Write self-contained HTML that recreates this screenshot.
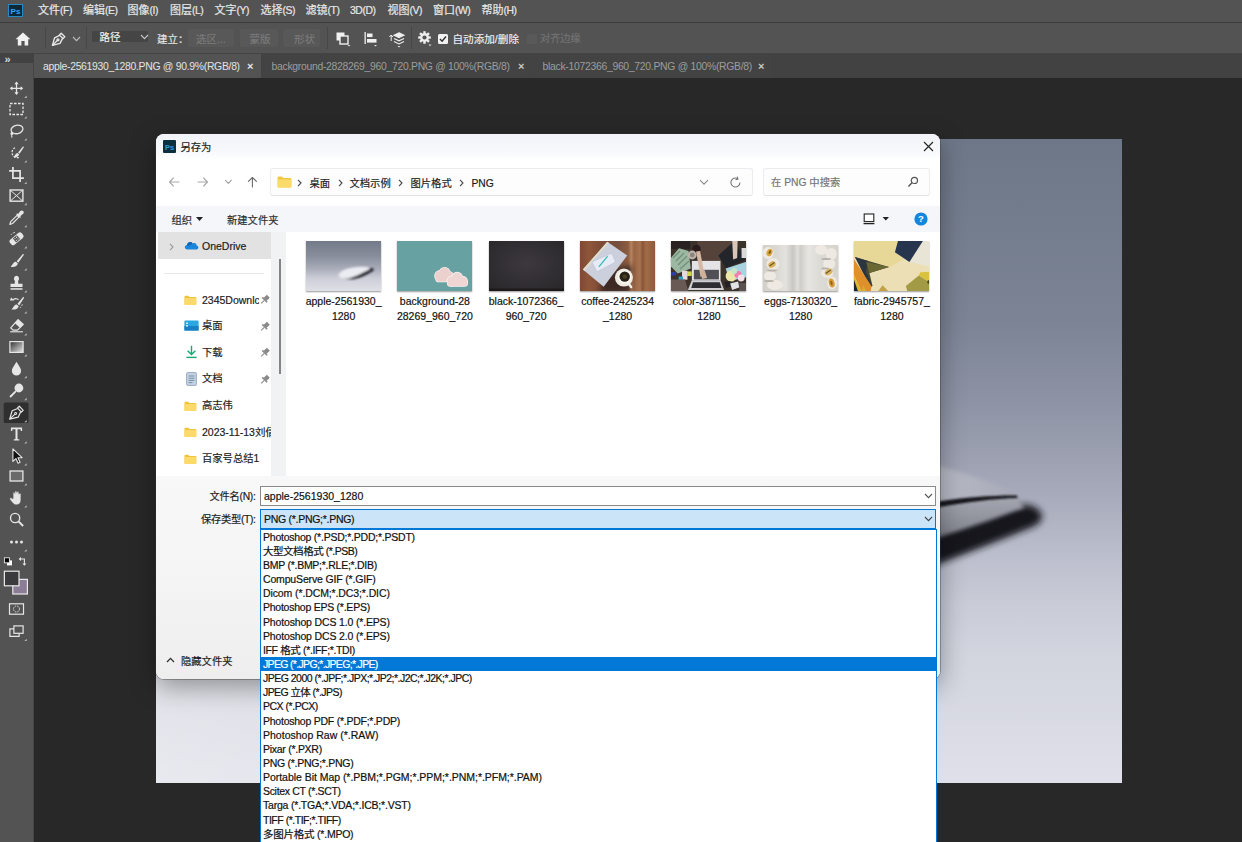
<!DOCTYPE html>
<html lang="zh-CN">
<head>
<meta charset="utf-8">
<title>另存为</title>
<style>
*{box-sizing:border-box;margin:0;padding:0}
html,body{width:1242px;height:842px;overflow:hidden;background:#282828}
body{position:relative;font-family:"Liberation Sans","Noto Sans CJK SC",sans-serif;font-size:12px;color:#000}
.abs{position:absolute}
/* ===== Photoshop chrome ===== */
#menubar{left:0;top:0;width:1242px;height:22px;background:#535353}
#menubar .m{-webkit-text-stroke:0.2px currentColor;position:absolute;top:-1px;height:22px;line-height:22px;color:#e8e8e8;font-size:11px;white-space:nowrap}
#menubar .m i{font-style:normal;font-size:10.4px;letter-spacing:-0.45px}
#menuline{left:0;top:22px;width:1242px;height:1px;background:#3c3c3c}
#optbar{left:0;top:23px;width:1242px;height:30px;background:#535353}
#optbar .t{-webkit-text-stroke:0.15px currentColor;position:absolute;top:0;height:30px;line-height:32px;color:#e8e8e8;font-size:12px;white-space:nowrap}
#optbar .sep{position:absolute;top:4px;width:1px;height:22px;background:#474747}
#tabbar{left:0;top:53px;width:1242px;height:25px;background:#424242}
.tab{position:absolute;top:0;height:25px;line-height:27.5px;font-size:10.4px;letter-spacing:-0.29px;white-space:nowrap;color:#9d9d9d;background:#434343}
.tab.on{background:#535353;color:#e4e4e4}
#tools{left:0;top:53px;width:34px;height:789px;background:#535353}
#toolstop{left:0;top:53px;width:34px;height:10px;background:#424242}
.tool{position:absolute;left:5px;width:24px;height:20px}
.tab .x{position:absolute;top:0;font-size:11px;font-weight:bold;color:#c9c9c9}
.tab.on .x{color:#e6e6e6}
/* ===== canvas ===== */
#canvas{left:156px;top:139px;width:966px;height:644px}
/* ===== dialog ===== */
#dlg{-webkit-text-stroke:0.18px currentColor;left:156px;top:134px;width:784px;height:545px;background:#fff;border-radius:8px;overflow:hidden;box-shadow:0 8px 26px rgba(0,0,0,.36),0 0 0 1px rgba(60,60,60,.35);font-size:12px;color:#1a1a1a}
#dlg .title{left:0;top:0;width:784px;height:26px;background:linear-gradient(180deg,#f1f3f8,#f8f9fb 70%,#fff)}
#dlg .cmd{left:0;top:72px;width:784px;height:26px;background:#f4f6f9}
#dlg .bottom{left:0;top:342px;width:784px;height:203px;background:linear-gradient(180deg,#f8f8f9 0%,#f5f5f6 45%,#eeeeef 100%)}
.lbl{position:absolute;white-space:nowrap}
.inp{position:absolute;background:#fff;border:1px solid #8a8a8a}
.crumb{top:39px;font-size:12px;line-height:16px;color:#444}
.ct{top:42.5px;font-size:10.3px;line-height:14px;color:#1b1b1b}
/* nav pane */
.nav{position:absolute;left:46px;white-space:nowrap;height:16px;line-height:16px}
/* thumbs */
.th{box-shadow:0 1px 1.5px rgba(0,0,0,.4)}
.cap{position:absolute;top:160px;width:100px;text-align:center;line-height:14.5px;font-size:10.5px;color:#111;white-space:nowrap}
/* dropdown */
#dd{left:260px;top:529px;width:677px;height:320px;background:#fff;border:1px solid #0078d7;font-size:10.5px;color:#111}
#dd div{-webkit-text-stroke:0.2px currentColor;position:absolute;left:0;width:675px;height:14.14px;line-height:14.14px;padding-left:2px;white-space:nowrap}
#dd div.sel{background:#0078d7;color:#fff}
</style>
</head>
<body>
<div class="abs" id="menubar">
<svg class="abs" style="left:8px;top:4px" width="15" height="13" viewBox="0 0 15 13"><rect x="0.5" y="0.5" width="14" height="12" fill="#0a2a3c" stroke="#2489c4" stroke-width="1"/><text x="7.5" y="9.6" font-family="Liberation Sans, sans-serif" font-size="8" font-weight="bold" fill="#31a8ff" text-anchor="middle">Ps</text></svg>
<span class="m" style="left:38px">文件<i>(F)</i></span>
<span class="m" style="left:83px">编辑<i>(E)</i></span>
<span class="m" style="left:127.5px">图像<i>(I)</i></span>
<span class="m" style="left:170px">图层<i>(L)</i></span>
<span class="m" style="left:214.5px">文字<i>(Y)</i></span>
<span class="m" style="left:260.5px">选择<i>(S)</i></span>
<span class="m" style="left:305.5px">滤镜<i>(T)</i></span>
<span class="m" style="left:350px"><i>3D(D)</i></span>
<span class="m" style="left:387.5px">视图<i>(V)</i></span>
<span class="m" style="left:433px">窗口<i>(W)</i></span>
<span class="m" style="left:481.5px">帮助<i>(H)</i></span>
</div>
<div class="abs" id="menuline"></div>
<div class="abs" id="optbar">
<svg class="abs" style="left:15px;top:9px" width="16" height="14" viewBox="0 0 16 14"><path d="M8 0.6 L0.6 7.2 H2.8 V13.4 H6.4 V9 H9.6 V13.4 H13.2 V7.2 H15.4 Z" fill="#f0f0f0"/></svg>
<div class="sep" style="left:45px"></div>
<svg class="abs" style="left:51px;top:8px" width="16" height="16" viewBox="0 0 16 16"><g fill="none" stroke="#eaeaea" stroke-width="1.3" stroke-linejoin="round" stroke-linecap="round"><path d="M10.2 2.2 L13.8 5.8 L12 7.6 L8.4 4 Z"/><path d="M8.6 4.4 L3.6 6.8 L1.4 14.4 L9 12.4 L11.6 7.4"/><path d="M1.6 14.2 L6.4 9.4"/><circle cx="7" cy="8.8" r="1"/></g></svg>
<svg class="abs" style="left:71.5px;top:13px" width="9" height="6" viewBox="0 0 9 6"><path d="M1 1 L4.5 4.6 L8 1" fill="none" stroke="#bdbdbd" stroke-width="1.1"/></svg>
<div class="sep" style="left:86px"></div>
<div class="abs" style="left:92.3px;top:8px;width:56.2px;height:10.8px;background:#454545;border-radius:1px"></div>
<span class="t" style="left:99.5px;top:-2px;font-size:10.5px;color:#f2f2f2">路径</span>
<svg class="abs" style="left:139.5px;top:11px" width="9" height="6" viewBox="0 0 9 6"><path d="M1 1 L4.5 4.6 L8 1" fill="none" stroke="#c8c8c8" stroke-width="1.1"/></svg>
<span class="t" style="left:157px;top:0px;font-size:10.5px;color:#e6e6e6">建立：</span>
<div class="abs" style="left:187.5px;top:6px;width:46.5px;height:18px;background:#585858;border-radius:2px"></div>
<span class="t" style="left:196px;top:0;font-size:10.5px;color:#7b7b7b">选区...</span>
<div class="abs" style="left:240px;top:6px;width:37.5px;height:18px;background:#585858;border-radius:2px"></div>
<span class="t" style="left:249.5px;top:0;font-size:10.5px;color:#7b7b7b">蒙版</span>
<div class="abs" style="left:282.5px;top:6px;width:37.5px;height:18px;background:#585858;border-radius:2px"></div>
<span class="t" style="left:294px;top:0;font-size:10.5px;color:#7b7b7b">形状</span>
<div class="sep" style="left:327px"></div>
<svg class="abs" style="left:336px;top:9px" width="15" height="15" viewBox="0 0 15 15"><rect x="0.5" y="0.5" width="8" height="8" fill="#f0f0f0"/><rect x="4" y="4" width="8" height="8" fill="#535353" stroke="#f0f0f0" stroke-width="1.4"/><path d="M11.5 13 h3 l-1.5 1.6z" fill="#ddd"/></svg>
<svg class="abs" style="left:364px;top:9px" width="14" height="15" viewBox="0 0 14 15"><rect x="0.5" y="0" width="1.3" height="12" fill="#f0f0f0"/><rect x="3" y="1.5" width="5.5" height="3.6" fill="#f0f0f0"/><rect x="3" y="7" width="9.5" height="3.6" fill="#f0f0f0"/><path d="M10 13 h3 l-1.5 1.6z" fill="#ddd"/></svg>
<svg class="abs" style="left:389px;top:8px" width="17" height="17" viewBox="0 0 17 17"><g fill="none" stroke="#eee" stroke-width="1.1"><path d="M10 1.8 L15 4.2 L10 6.6 L5 4.2 Z" fill="#eee"/><path d="M5 7.4 L10 9.8 L15 7.4"/><path d="M5 10.6 L10 13 L15 10.6"/></g><path d="M2.2 4 v6 M0.4 6 L2.2 4 L4 6" fill="none" stroke="#eee" stroke-width="1"/><path d="M8.5 15 h3 l-1.5 1.6z" fill="#ddd"/></svg>
<div class="sep" style="left:411px"></div>
<svg class="abs" style="left:418px;top:8px" width="15" height="16" viewBox="0 0 15 16"><g transform="translate(6.5 6.5)"><g fill="#eee"><rect x="-1.2" y="-6.3" width="2.4" height="12.6"/><rect x="-1.2" y="-6.3" width="2.4" height="12.6" transform="rotate(45)"/><rect x="-1.2" y="-6.3" width="2.4" height="12.6" transform="rotate(90)"/><rect x="-1.2" y="-6.3" width="2.4" height="12.6" transform="rotate(135)"/></g><circle r="4.4" fill="#eee"/><circle r="2.1" fill="#535353"/></g><path d="M10.5 13.6 h3 l-1.5 1.6z" fill="#ddd"/></svg>
<div class="abs" style="left:438px;top:11px;width:9.5px;height:9.5px;background:#f2f2f2;border-radius:1.5px"></div>
<svg class="abs" style="left:438px;top:11px" width="10" height="10" viewBox="0 0 10 10"><path d="M2 5 L4.1 7.2 L8 2.6" fill="none" stroke="#333" stroke-width="1.5"/></svg>
<span class="t" style="left:452.5px;top:0;font-size:10.6px;color:#f0f0f0">自动添加/删除</span>
<div class="abs" style="left:527px;top:11px;width:9.5px;height:9.5px;background:#595959;border-radius:1.5px"></div>
<span class="t" style="left:540px;top:0;font-size:10.2px;color:#747474">对齐边缘</span>
</div>
<div class="abs" id="tabbar">
<div class="tab on" style="left:34px;width:227px"><span style="position:absolute;left:9px">apple-2561930_1280.PNG @ 90.9%(RGB/8)</span><span class="x" style="left:213px">×</span></div>
<div class="tab" style="left:262px;width:270px"><span style="position:absolute;left:9.5px">background-2828269_960_720.PNG @ 100%(RGB/8)</span><span class="x" style="left:256px">×</span></div>
<div class="tab" style="left:533px;width:238px"><span style="position:absolute;left:9.5px">black-1072366_960_720.PNG @ 100%(RGB/8)</span><span class="x" style="left:225px">×</span></div>
</div>
<div class="abs" style="left:0;top:52.5px;width:1242px;height:1px;background:#444"></div>
<div class="abs" id="tools"></div>
<div class="abs" id="toolstop"></div>
<div class="abs" style="left:33px;top:63px;width:1px;height:779px;background:#454545"></div>
<div class="abs" style="left:4.5px;top:52.5px;font-size:11px;line-height:12px;color:#d8d8d8;letter-spacing:-1px;font-weight:bold">»</div>
<svg class="abs" style="left:0;top:53px" width="34" height="789" viewBox="0 0 34 789" stroke="#e6e6e6"><g transform="translate(16.5 35.3)"><g transform="scale(.88)"><path d="M0 -6.5 V6.5 M-6.5 0 H6.5" fill="none" stroke-width="1.5"/><path d="M0 -7.6 L2.4 -4.6 H-2.4Z M0 7.6 L2.4 4.6 H-2.4Z M-7.6 0 L-4.6 -2.4 V2.4Z M7.6 0 L4.6 -2.4 V2.4Z" fill="#e6e6e6" stroke="none"/></g><path d="M10.2 7.2 L10.2 9.6 L7.8 9.6 Z" fill="#bdbdbd" stroke="none"/></g><g transform="translate(16.5 56.0)"><rect x="-6.5" y="-5.5" width="13" height="11" fill="none" stroke-width="1.3" stroke-dasharray="2.6 1.4"/><path d="M10.2 7.2 L10.2 9.6 L7.8 9.6 Z" fill="#bdbdbd" stroke="none"/></g><g transform="translate(16.5 78.0)"><ellipse cx="0.8" cy="-1.4" rx="6" ry="4.2" fill="none" stroke-width="1.3" transform="rotate(-12)"/><path d="M-4.6 1.2 C-6.4 2.4 -5.4 4.4 -4 3.4 C-3 2.6 -4.4 1.4 -4.8 3.6 L-4.6 6.6" fill="none" stroke-width="1.1"/><path d="M10.2 7.2 L10.2 9.6 L7.8 9.6 Z" fill="#bdbdbd" stroke="none"/></g><g transform="translate(16.5 100.0)"><path d="M-1.5 -5.2 A5.2 5.2 0 1 0 3 4.2" fill="none" stroke-width="1.2" stroke-dasharray="2 1.3"/><path d="M6.6 -6.8 L1.6 -0.6 L3 0.8 L7.4 -5.8 Z" fill="#e6e6e6" stroke="none"/><path d="M1 0 C-0.8 0.2 -1.6 2.2 -2.6 4.4 C0 4.6 2.2 3.6 2.6 1.6 Z" fill="#e6e6e6" stroke="none"/><path d="M10.2 7.2 L10.2 9.6 L7.8 9.6 Z" fill="#bdbdbd" stroke="none"/></g><g transform="translate(16.5 121.5)"><path d="M-3.6 -7.4 V3.6 H7.4 M-7.4 -3.6 H3.6 V7.4" fill="none" stroke-width="1.7"/><path d="M10.2 7.2 L10.2 9.6 L7.8 9.6 Z" fill="#bdbdbd" stroke="none"/></g><g transform="translate(16.5 142.6)"><rect x="-6.4" y="-5.6" width="12.8" height="11.2" fill="none" stroke-width="1.4"/><path d="M-6.4 -5.6 L6.4 5.6 M6.4 -5.6 L-6.4 5.6" fill="none" stroke-width="1"/><path d="M10.2 7.2 L10.2 9.6 L7.8 9.6 Z" fill="#bdbdbd" stroke="none"/></g><g transform="translate(16.5 164.7)"><path d="M-6.6 6.8 L-5.8 4 L0.6 -2.4 L2.4 -0.6 L-4 5.8 Z" fill="none" stroke-width="1.2" stroke-linejoin="round"/><path d="M0.2 -4 L4 -0.2 M1.6 -2.6 L4.4 -6.2 C5.4 -7.4 7.4 -5.6 6.2 -4.4 L2.6 -1.6" fill="#e6e6e6" stroke-width="1.4" stroke-linejoin="round"/><path d="M10.2 7.2 L10.2 9.6 L7.8 9.6 Z" fill="#bdbdbd" stroke="none"/></g><g transform="translate(16.5 185.8)"><g transform="rotate(-40)"><rect x="-7.6" y="-3.4" width="15.2" height="6.8" rx="2.6" fill="#e6e6e6" stroke="none"/><rect x="-2.6" y="-2.6" width="5.2" height="5.2" fill="#535353" stroke="none"/><circle cx="-1.1" cy="-1.1" r=".6" fill="#e6e6e6" stroke="none"/><circle cx="1.1" cy="-1.1" r=".6" fill="#e6e6e6" stroke="none"/><circle cx="-1.1" cy="1.1" r=".6" fill="#e6e6e6" stroke="none"/><circle cx="1.1" cy="1.1" r=".6" fill="#e6e6e6" stroke="none"/></g><path d="M-5.4 -4.2 A6 6 0 0 1 -0.6 -6.4" fill="none" stroke-width="1" stroke-dasharray="1.6 1.2"/><path d="M10.2 7.2 L10.2 9.6 L7.8 9.6 Z" fill="#bdbdbd" stroke="none"/></g><g transform="translate(16.5 208.0)"><path d="M6.6 -7.2 L0.2 0.2 L1.8 1.8 L7.4 -6.2 Z" fill="#e6e6e6" stroke="none"/><path d="M-0.6 0.8 C-3 0.8 -3.4 3.4 -5.8 5.8 C-2.4 6.6 1.2 5 1.4 2.6 Z" fill="#e6e6e6" stroke="none"/><path d="M10.2 7.2 L10.2 9.6 L7.8 9.6 Z" fill="#bdbdbd" stroke="none"/></g><g transform="translate(16.5 230.0)"><path d="M-1.6 -2.2 C-3.4 -3.6 -2.4 -7.2 0 -7.2 C2.4 -7.2 3.4 -3.6 1.6 -2.2 L1.8 0.8 H6 V4 H-6 V0.8 H-1.8 Z" fill="#e6e6e6" stroke="none"/><rect x="-6" y="5.2" width="12" height="1.5" fill="#e6e6e6" stroke="none"/><path d="M10.2 7.2 L10.2 9.6 L7.8 9.6 Z" fill="#bdbdbd" stroke="none"/></g><g transform="translate(16.5 251.0)"><path d="M6.8 -7.2 L1 -0.2 L2.6 1.4 L7.6 -6.2 Z" fill="#e6e6e6" stroke="none"/><path d="M0.2 0.4 C-2.2 0.4 -2.6 3 -5 5.4 C-1.6 6.2 2 4.6 2.2 2.2 Z" fill="#e6e6e6" stroke="none"/><path d="M-6.6 -3.4 L-2.4 -3.6 L-5.4 -6.4" fill="#e6e6e6" stroke="none"/><path d="M-3.4 -4.2 C-1.6 -5.8 0.8 -5.6 2 -4.2" fill="none" stroke-width="1.1"/><path d="M3.4 3.8 A5 5 0 0 0 5.8 0" fill="none" stroke-width="1" stroke-dasharray="1.5 1.2"/><path d="M10.2 7.2 L10.2 9.6 L7.8 9.6 Z" fill="#bdbdbd" stroke="none"/></g><g transform="translate(16.5 273.0)"><path d="M1.6 -6.4 L6.8 -1.6 L1 4.2 H-3.4 L-5.8 1.8 Z" fill="none" stroke-width="1.2" stroke-linejoin="round"/><path d="M1.6 -6.4 L6.8 -1.6 L3.4 1.8 L-1.8 -3 Z" fill="#e6e6e6" stroke="none"/><path d="M-6.4 5.8 H6.4" fill="none" stroke-width="1.1"/><path d="M10.2 7.2 L10.2 9.6 L7.8 9.6 Z" fill="#bdbdbd" stroke="none"/></g><defs><linearGradient id="gr" x1="0" y1="0" x2="1" y2="1"><stop offset="0" stop-color="#303030"/><stop offset="1" stop-color="#e8e8e8"/></linearGradient></defs><g transform="translate(16.5 294.0)"><rect x="-6.6" y="-5.4" width="13.2" height="10.8" fill="url(#gr)" stroke-width="1.2"/><path d="M10.2 7.2 L10.2 9.6 L7.8 9.6 Z" fill="#bdbdbd" stroke="none"/></g><g transform="translate(16.5 315.6)"><path d="M0 -6.8 C2 -3 4.6 -0.6 4.6 2.4 A4.6 4.6 0 0 1 -4.6 2.4 C-4.6 -0.6 -2 -3 0 -6.8Z" fill="#e6e6e6" stroke="none"/><path d="M10.2 7.2 L10.2 9.6 L7.8 9.6 Z" fill="#bdbdbd" stroke="none"/></g><g transform="translate(16.5 337.6)"><circle cx="2.4" cy="-2.6" r="4.4" fill="#e6e6e6" stroke="none"/><path d="M-0.6 0.6 L-6.4 6.4" fill="none" stroke-width="1.8"/><path d="M10.2 7.2 L10.2 9.6 L7.8 9.6 Z" fill="#bdbdbd" stroke="none"/></g><rect x="3.7" y="349.6" width="24.8" height="20.4" rx="1.5" fill="#2f2f2f" stroke="none"/><g transform="translate(16.5 359.7)"><g transform="rotate(2)"><path d="M2.6 -6.6 L6.6 -2.6 L4.8 -0.8 L0.8 -4.8 Z" fill="none" stroke-width="1.2" stroke-linejoin="round"/><path d="M1 -4.2 L-4.4 -1.8 L-6.6 6.6 L1.8 4.4 L4.2 -1" fill="none" stroke-width="1.2" stroke-linejoin="round"/><path d="M-6.2 6.2 L-1.4 1.4" fill="none" stroke-width="1.1"/><circle cx="-0.8" cy="0.8" r="1" fill="none" stroke-width="1"/></g><path d="M10.2 7.2 L10.2 9.6 L7.8 9.6 Z" fill="#bdbdbd" stroke="none"/></g><g transform="translate(16.5 381.0)"><path d="M-5.6 -6.4 H5.6 V-3 H4.4 L4 -4.8 H1 V5 L2.8 5.4 V6.4 H-2.8 V5.4 L-1 5 V-4.8 H-4 L-4.4 -3 H-5.6 Z" fill="#e6e6e6" stroke="none"/><path d="M10.2 7.2 L10.2 9.6 L7.8 9.6 Z" fill="#bdbdbd" stroke="none"/></g><g transform="translate(16.5 403.0)"><path d="M-3.6 -7.2 V5.4 L-0.6 2.6 L1.6 7.2 L3.6 6.2 L1.4 1.8 L5.6 1.6 Z" fill="#111" stroke-width="1.1" stroke-linejoin="round"/><path d="M10.2 7.2 L10.2 9.6 L7.8 9.6 Z" fill="#bdbdbd" stroke="none"/></g><g transform="translate(16.5 423.0)"><rect x="-6.4" y="-5" width="12.8" height="10" fill="#6a6a6a" stroke-width="1.3"/><path d="M10.2 7.2 L10.2 9.6 L7.8 9.6 Z" fill="#bdbdbd" stroke="none"/></g><g transform="translate(16.5 445.0)"><path d="M-3.4 0.6 V-4.6 C-3.4 -6 -1.6 -6 -1.6 -4.6 V-6 C-1.6 -7.4 0.4 -7.4 0.4 -6 V-5.4 C0.4 -6.8 2.4 -6.8 2.4 -5.4 V-3.8 C2.4 -5.2 4.4 -5.2 4.4 -3.8 V2 C4.4 5 2.6 6.8 0 6.8 C-2.6 6.8 -3.6 5.4 -6.6 1.2 C-7.2 0 -5.6 -0.8 -4.8 0.2 Z" fill="#e6e6e6" stroke="#535353" stroke-width=".5"/><path d="M10.2 7.2 L10.2 9.6 L7.8 9.6 Z" fill="#bdbdbd" stroke="none"/></g><g transform="translate(16.5 466.6)"><circle cx="-1.4" cy="-1.6" r="4.6" fill="none" stroke-width="1.4"/><path d="M2 1.8 L6.6 6.4" fill="none" stroke-width="2"/></g><g transform="translate(16.5 489.0)"><circle cx="-5" cy="0" r="1.5" fill="#e6e6e6" stroke="none"/><circle cx="0" cy="0" r="1.5" fill="#e6e6e6" stroke="none"/><circle cx="5" cy="0" r="1.5" fill="#e6e6e6" stroke="none"/><path d="M10.2 7.2 L10.2 9.6 L7.8 9.6 Z" fill="#bdbdbd" stroke="none"/></g><g transform="translate(0 509)"><rect x="7" y="-1.6" width="5" height="5" fill="#fff" stroke="none"/><rect x="4.4" y="-4.2" width="5" height="5" fill="#000" stroke="#e6e6e6" stroke-width=".9"/><path d="M20.4 -3 H24.4 V2" fill="none" stroke-width="1.1"/><path d="M21 -5 L18.6 -3 L21 -1Z M22.4 1.4 L24.4 3.8 L26.4 1.4Z" fill="#e6e6e6" stroke="none"/></g><rect x="12.8" y="526.4" width="14.6" height="14.6" fill="#8b7d95" stroke="#e9e9e9" stroke-width="1.2"/><rect x="4.4" y="518.2" width="14.6" height="14.6" fill="#3b3b3d" stroke="#e9e9e9" stroke-width="1.2"/><g transform="translate(16.5 556.0)"><rect x="-7" y="-5.2" width="14" height="10.4" fill="none" stroke-width="1.2"/><circle cx="0" cy="0" r="3" fill="none" stroke-width="1" stroke-dasharray="1.4 1"/></g><g transform="translate(16.5 578.5)"><rect x="-2.6" y="-5.6" width="9.2" height="7.4" fill="none" stroke-width="1.2"/><path d="M-2.6 -2.6 H-6.6 V4.8 H2.6 V1.8" fill="none" stroke-width="1.2"/><path d="M10.2 7.2 L10.2 9.6 L7.8 9.6 Z" fill="#bdbdbd" stroke="none"/></g></svg>
<svg class="abs" id="canvas" width="966" height="644" viewBox="156 139 966 644">
<defs>
<linearGradient id="cg" x1="0" y1="0" x2="0" y2="1"><stop offset="0" stop-color="#6e7788"/><stop offset=".28" stop-color="#7b8395"/><stop offset=".4" stop-color="#8c92a4"/><stop offset=".5" stop-color="#9da1b2"/><stop offset=".56" stop-color="#a8acbc"/><stop offset=".64" stop-color="#babdcb"/><stop offset=".72" stop-color="#c9cbd7"/><stop offset=".8" stop-color="#d2d4de"/><stop offset="1" stop-color="#dfe0e9"/></linearGradient>
<linearGradient id="cl" x1="0" y1="0" x2="1" y2="0"><stop offset="0" stop-color="#fff" stop-opacity=".3"/><stop offset="1" stop-color="#fff" stop-opacity="0"/></linearGradient>
<linearGradient id="mt" gradientUnits="userSpaceOnUse" x1="930" y1="0" x2="1020" y2="0"><stop offset="0" stop-color="#babdc7"/><stop offset="1" stop-color="#a6a9b7"/></linearGradient>
<linearGradient id="ms" x1="0" y1="0" x2="0" y2="1"><stop offset="0" stop-color="#a4a6b0"/><stop offset=".6" stop-color="#8a8c96"/><stop offset="1" stop-color="#5a5c64"/></linearGradient>
<filter id="bl4" x="-30%" y="-50%" width="160%" height="200%"><feGaussianBlur stdDeviation="3.5"/></filter>
<filter id="bl2" x="-20%" y="-20%" width="140%" height="140%"><feGaussianBlur stdDeviation="2"/></filter>
<filter id="bl5" x="-30%" y="-50%" width="160%" height="200%"><feGaussianBlur stdDeviation="5"/></filter>
<filter id="bl1" x="-20%" y="-20%" width="140%" height="140%"><feGaussianBlur stdDeviation="1"/></filter>
</defs>
<rect x="156" y="139" width="966" height="644" fill="url(#cg)"/>
<rect x="156" y="600" width="500" height="183" fill="url(#cl)"/>
<path d="M900 545 L940 533 C975 523 1000 514 1014 505 L1030 505 C1046 511 1046 522 1030 528 C1000 540 970 552 940 563.500 L900 580Z" fill="#17181d" filter="url(#bl4)"/>
<path d="M900 505 L940 502 C970 498 1000 496 1018 497 L1024 508 C1000 516 970 526 940 536 L900 548Z" fill="url(#ms)" filter="url(#bl2)"/>
<path d="M900 455 C940 466 990 480 1017 494.500 C990 494 960 498 940 502 L900 510Z" fill="url(#mt)" filter="url(#bl2)"/>
<path d="M900 508.500 L940 501.300 C965 497.300 995 495.200 1017 495.500 L1017.500 498 C995 498.600 965 502.300 940 507 L900 517Z" fill="#17181d" filter="url(#bl1)"/>
</svg>
<div class="abs" id="dlg">
<div class="abs title"></div>
<div class="abs cmd"></div>
<div class="abs" style="left:0;top:98px;width:115px;height:244px;background:#fff"></div>
<div class="abs" style="left:115px;top:98px;width:15px;height:244px;background:#f1f2f4"></div>
<div class="abs bottom"></div>
<!-- nav pane -->
<div class="abs" style="left:2px;top:98px;width:113px;height:27px;background:#e2e2e3"></div>
<svg class="abs" style="left:12.5px;top:108.5px" width="5" height="8" viewBox="0 0 5 8"><path d="M1 0.8 L4 4 L1 7.2" fill="none" stroke="#9a9a9a" stroke-width="1.1"/></svg>
<svg class="abs" style="left:27.5px;top:106px" width="15" height="10" viewBox="0 0 15 10"><path d="M3.4 9.4 C0.2 9.4 0 5.2 3 4.9 C3.4 2 7 1 8.6 3.4 C11 2.2 13 4 12.6 5.6 C15 5.8 15 9.4 12.4 9.4Z" fill="#1a86d9"/><path d="M3 4.9 C3.4 2 7 1 8.6 3.4 L4.4 6.2Z" fill="#1565b8"/></svg>
<span class="nav" style="top:104.0px;font-size:10.5px;color:#1b1b1b">OneDrive</span>
<div class="abs" style="left:8px;top:138.5px;width:100px;height:1px;background:#e8e8e8"></div>
<div class="abs" style="left:122.5px;top:125px;width:2px;height:115px;background:#858585"></div>
<svg class="abs" style="left:28.2px;top:160.6px" width="12.8" height="10.6" viewBox="0 0 15 12"><path d="M0.6 1.6 Q0.6 0.6 1.6 0.6 H5 L6.4 2 H13.4 Q14.4 2 14.4 3 V10.4 Q14.4 11.4 13.4 11.4 H1.6 Q0.6 11.4 0.6 10.4Z" fill="#f0c33c"/><path d="M0.6 3.4 H14.4 V10.4 Q14.4 11.4 13.4 11.4 H1.6 Q0.6 11.4 0.6 10.4Z" fill="#fbd96a"/></svg>
<span class="nav" style="top:157.5px;font-size:10.5px;color:#1b1b1b; overflow:hidden;width:57px;">2345Downlc</span>
<svg class="abs" style="left:103px;top:160.0px" width="11.5" height="11.5" viewBox="0 0 10 10"><g transform="rotate(45 5 5)" fill="#8a8a8a"><rect x="3.2" y="0.6" width="3.6" height="4.2"/><rect x="2" y="4.4" width="6" height="1.3"/><rect x="4.6" y="5.6" width=".9" height="3.8"/></g></svg>
<svg class="abs" style="left:28px;top:186.1px" width="15" height="11" viewBox="0 0 15 11"><rect x="0.4" y="0.4" width="14.2" height="10.2" rx="1" fill="#2aa7e0"/><rect x="0.4" y="6" width="14.2" height="4.6" fill="#1b7fc4"/><rect x="2" y="2.4" width="2" height="1.6" fill="#bfe7fa"/><rect x="2" y="5" width="2" height="1.6" fill="#bfe7fa"/></svg>
<span class="nav" style="top:184.1px;font-size:10.3px;color:#1b1b1b;">桌面</span>
<svg class="abs" style="left:103px;top:186.6px" width="11.5" height="11.5" viewBox="0 0 10 10"><g transform="rotate(45 5 5)" fill="#8a8a8a"><rect x="3.2" y="0.6" width="3.6" height="4.2"/><rect x="2" y="4.4" width="6" height="1.3"/><rect x="4.6" y="5.6" width=".9" height="3.8"/></g></svg>
<svg class="abs" style="left:29px;top:211.1px" width="13" height="14" viewBox="0 0 13 14"><path d="M6.5 0.8 V9.4 M2.6 5.8 L6.5 9.6 L10.4 5.8" fill="none" stroke="#19a974" stroke-width="1.4"/><path d="M1.4 12.4 H11.6" stroke="#19a974" stroke-width="1.4"/></svg>
<span class="nav" style="top:210.6px;font-size:10.3px;color:#1b1b1b;">下载</span>
<svg class="abs" style="left:103px;top:213.1px" width="11.5" height="11.5" viewBox="0 0 10 10"><g transform="rotate(45 5 5)" fill="#8a8a8a"><rect x="3.2" y="0.6" width="3.6" height="4.2"/><rect x="2" y="4.4" width="6" height="1.3"/><rect x="4.6" y="5.6" width=".9" height="3.8"/></g></svg>
<svg class="abs" style="left:30px;top:237.6px" width="11" height="14" viewBox="0 0 11 14"><rect x="0.6" y="0.6" width="9.8" height="12.8" rx="1" fill="#c4d3e3" stroke="#8a9bb0" stroke-width=".8"/><path d="M2.6 4 H8.4 M2.6 6.2 H8.4 M2.6 8.4 H8.4 M2.6 10.6 H6.4" stroke="#6f88a6" stroke-width=".9"/></svg>
<span class="nav" style="top:237.1px;font-size:10.3px;color:#1b1b1b;">文档</span>
<svg class="abs" style="left:103px;top:239.6px" width="11.5" height="11.5" viewBox="0 0 10 10"><g transform="rotate(45 5 5)" fill="#8a8a8a"><rect x="3.2" y="0.6" width="3.6" height="4.2"/><rect x="2" y="4.4" width="6" height="1.3"/><rect x="4.6" y="5.6" width=".9" height="3.8"/></g></svg>
<svg class="abs" style="left:28.2px;top:266.8px" width="12.8" height="10.6" viewBox="0 0 15 12"><path d="M0.6 1.6 Q0.6 0.6 1.6 0.6 H5 L6.4 2 H13.4 Q14.4 2 14.4 3 V10.4 Q14.4 11.4 13.4 11.4 H1.6 Q0.6 11.4 0.6 10.4Z" fill="#f0c33c"/><path d="M0.6 3.4 H14.4 V10.4 Q14.4 11.4 13.4 11.4 H1.6 Q0.6 11.4 0.6 10.4Z" fill="#fbd96a"/></svg>
<span class="nav" style="top:263.7px;font-size:10.3px;color:#1b1b1b;">高志伟</span>
<svg class="abs" style="left:28.2px;top:293.4px" width="12.8" height="10.6" viewBox="0 0 15 12"><path d="M0.6 1.6 Q0.6 0.6 1.6 0.6 H5 L6.4 2 H13.4 Q14.4 2 14.4 3 V10.4 Q14.4 11.4 13.4 11.4 H1.6 Q0.6 11.4 0.6 10.4Z" fill="#f0c33c"/><path d="M0.6 3.4 H14.4 V10.4 Q14.4 11.4 13.4 11.4 H1.6 Q0.6 11.4 0.6 10.4Z" fill="#fbd96a"/></svg>
<span class="nav" style="top:290.2px;font-size:10.5px;color:#1b1b1b; overflow:hidden;width:69px;">2023-11-13刘倩</span>
<svg class="abs" style="left:28.2px;top:319.9px" width="12.8" height="10.6" viewBox="0 0 15 12"><path d="M0.6 1.6 Q0.6 0.6 1.6 0.6 H5 L6.4 2 H13.4 Q14.4 2 14.4 3 V10.4 Q14.4 11.4 13.4 11.4 H1.6 Q0.6 11.4 0.6 10.4Z" fill="#f0c33c"/><path d="M0.6 3.4 H14.4 V10.4 Q14.4 11.4 13.4 11.4 H1.6 Q0.6 11.4 0.6 10.4Z" fill="#fbd96a"/></svg>
<span class="nav" style="top:316.8px;font-size:10.3px;color:#1b1b1b;">百家号总结1</span>
<!-- files -->
<svg class="abs th" style="left:150.0px;top:107px;height:50px;width:75.2px" width="75.2" height="50" viewBox="0 0 75 50" preserveAspectRatio="none"><defs><linearGradient id="t1" x1="0" y1="0" x2="0" y2="1"><stop offset="0" stop-color="#737a89"/><stop offset=".3" stop-color="#878d9b"/><stop offset=".55" stop-color="#a9acb9"/><stop offset=".75" stop-color="#cdced8"/><stop offset="1" stop-color="#dfdfe6"/></linearGradient><filter id="b1"><feGaussianBlur stdDeviation=".9"/></filter></defs>
<rect width="75" height="50" fill="url(#t1)"/>
<g filter="url(#b1)"><path d="M38 37.500 C47 40.500 60 35 68 29 C67.500 27 64 26.500 62 27 L42 37.500Z" fill="#23242b"/>
<path d="M32.500 34.500 C33 28.500 48 24.500 60 26 C64 26.500 65 27.500 62 29 C54 33 46 37.500 40 37.500 C35 37.500 32.500 36.500 32.500 34.500Z" fill="#ebebf2"/></g></svg>
<svg class="abs th" style="left:241.3px;top:107px;height:50px;width:75.2px" width="75.2" height="50" viewBox="0 0 75 50" preserveAspectRatio="none"><rect width="75" height="50" fill="#68a1a2"/>
<g fill="#f7f1ee" stroke="#f7f1ee" stroke-width="1.4"><circle cx="43" cy="35" r="5.2"/><circle cx="47.5" cy="31.6" r="5"/><circle cx="52" cy="35.4" r="4.6"/><rect x="39" y="35" width="16" height="5.6" rx="2.4"/></g><g fill="#ecd0ce"><circle cx="43" cy="35" r="5.2"/><circle cx="47.5" cy="31.6" r="5"/><circle cx="52" cy="35.4" r="4.6"/><rect x="39" y="35" width="16" height="5.6" rx="2.4"/></g><g fill="#faf5f2" stroke="#faf5f2" stroke-width="1.4"><circle cx="55" cy="40" r="4.8"/><circle cx="60" cy="36.6" r="5.2"/><circle cx="65.4" cy="40" r="4.6"/><rect x="50.6" y="39.4" width="19.4" height="5.6" rx="2.6"/></g><g fill="#f0d5d5"><circle cx="55" cy="40" r="4.8"/><circle cx="60" cy="36.6" r="5.2"/><circle cx="65.4" cy="40" r="4.6"/><rect x="50.6" y="39.4" width="19.4" height="5.6" rx="2.6"/></g></svg>
<svg class="abs th" style="left:332.5px;top:107px;height:50px;width:75.2px" width="75.2" height="50" viewBox="0 0 75 50" preserveAspectRatio="none"><defs><radialGradient id="t3" cx=".5" cy=".45" r=".7"><stop offset="0" stop-color="#3c383e"/><stop offset="1" stop-color="#2a272b"/></radialGradient></defs><rect width="75" height="50" fill="url(#t3)"/><rect x="0" y="47.5" width="75" height="2.5" fill="#1c1a1b"/></svg>
<svg class="abs th" style="left:424.0px;top:107px;height:50px;width:75.2px" width="75.2" height="50" viewBox="0 0 75 50" preserveAspectRatio="none"><defs><linearGradient id="t4" x1="0" y1="0" x2="1" y2="0"><stop offset="0" stop-color="#7d4a33"/><stop offset=".12" stop-color="#8f563a"/><stop offset=".3" stop-color="#7a4a35"/><stop offset=".5" stop-color="#75503f"/><stop offset=".64" stop-color="#8d5c40"/><stop offset=".68" stop-color="#b48460"/><stop offset=".72" stop-color="#9a6545"/><stop offset=".8" stop-color="#a87350"/><stop offset=".83" stop-color="#8a5638"/><stop offset=".88" stop-color="#a26b48"/><stop offset="1" stop-color="#8f5a3c"/></linearGradient><filter id="b4" x="-5%" y="-5%" width="110%" height="110%"><feGaussianBlur stdDeviation=".5"/></filter><filter id="b4b" x="-30%" y="-30%" width="160%" height="160%"><feGaussianBlur stdDeviation="2.500"/></filter></defs>
<rect width="75" height="50" fill="url(#t4)"/>
<path d="M24 30 L52 24 L50 52 H20Z" fill="#2a1d1a" opacity=".75" filter="url(#b4b)"/>
<g filter="url(#b4)"><path d="M27.200 0.700 L47.100 14.500 L23.600 45.700 L2.900 28.600Z" fill="#cccfdc"/><path d="M2.900 28.600 L27.200 0.700 L28.600 1.700 L4.600 29.900Z" fill="#e0dccb"/>
<path d="M12 21 L31.500 12.300 L35.500 21 L17 30.800Z" fill="#e7ebf6" stroke="#b9bfd0" stroke-width=".5"/><path d="M19.200 25.400 L27.200 15.600" stroke="#35bdb0" stroke-width="1.300" fill="none" stroke-linecap="round"/>
<circle cx="43.800" cy="36.600" r="9" fill="#efebe2"/><path d="M48 42 L51 46" stroke="#f4f1ea" stroke-width="2.400" stroke-linecap="round"/><circle cx="44.400" cy="35.800" r="6.600" fill="#fbfaf5"/><circle cx="44.600" cy="35.600" r="5.200" fill="#2a2214"/><circle cx="44.600" cy="35.600" r="2.200" fill="#4a4028"/></g></svg>
<svg class="abs th" style="left:515.3px;top:107px;height:50px;width:75.2px" width="75.2" height="50" viewBox="0 0 75 50" preserveAspectRatio="none"><defs><filter id="b5" x="-5%" y="-5%" width="110%" height="110%"><feGaussianBlur stdDeviation=".55"/></filter></defs>
<rect width="75" height="50" fill="#3a302c"/><g filter="url(#b5)">
<rect x="-2" y="-2" width="79" height="54" fill="#3a302c"/>
<path d="M26 -1 H62 L56 20 H28Z" fill="#54423a"/><rect x="-1" y="-1" width="20" height="9" fill="#2a2421"/>
<path d="M0 16.700 L8 7.200 L17.500 10 L19.700 27.500 L6.700 32.600 L0 25.400Z" fill="#9db8a2"/><path d="M2 17 L9 10 M5 20 L13 12 M7 24 L16 15 M9 28 L18 20" stroke="#6f8f78" stroke-width="1.2" fill="none"/>
<circle cx="25.500" cy="8" r="4.200" fill="#2a1f1b"/><circle cx="21.200" cy="14" r="4.400" fill="#bdb6ad"/><circle cx="21.200" cy="14" r="2.400" fill="#8d857c"/>
<path d="M47.200 14.500 L63.200 0 L74 18.800 L55.200 27.500Z" fill="#22262a"/>
<path d="M61 -1 H66.500 L66 17 L62 18.500Z" fill="#d9c6b8"/><rect x="70.400" y="7" width="6" height="10" fill="#d9d9dc"/>
<path d="M54.500 27.500 L76 20.500 V36 L58.800 40Z" fill="#a9d3df"/><circle cx="60" cy="35" r="5.500" fill="#ece7a8"/><circle cx="66.800" cy="33.500" r="3.600" fill="#ee7fb0"/><circle cx="63" cy="30" r="3" fill="#c5e6c8"/><circle cx="70" cy="37" r="3.400" fill="#f3e0e6"/>
<rect x="20.800" y="19.900" width="28.600" height="19.600" fill="#e4e4e7"/><rect x="22.800" y="28.800" width="25" height="9.600" fill="#505055"/>
<path d="M20.800 39.300 H49.400 L53 49 H16.800Z" fill="#cfcfd2"/><path d="M22 41.300 H48.600 L50.400 47.100 H20.200Z" fill="#2e2e32"/>
<path d="M25 10.500 L29 10 L33.500 34 L29.500 36 Z" fill="#d6b9a4"/><path d="M29.500 30 L33.500 29 L36 37 L31 38Z" fill="#cfb09b"/>
<rect x="0" y="31" width="5" height="3.600" fill="#2b3f9a"/><rect x="11" y="29.700" width="5.400" height="9" fill="#e8dada"/><rect x="16" y="30.400" width="4.600" height="4.600" fill="#cfd84a"/><rect x="7.600" y="35.500" width="4.400" height="4" fill="#2fa5b5"/>
<path d="M-1 38.400 H14 L17.500 51 H-1Z" fill="#6a5a55"/>
<path d="M53 41 L59 40 L61 45 L55 47Z" fill="#242426"/><path d="M59 42.500 L67 40.500 L68 46.500 L61 49Z" fill="#e2e2e5"/><rect x="68" y="42" width="8" height="9" fill="#5a5250"/>
</g></svg>
<svg class="abs th" style="left:607.0px;top:111px;height:46px;width:75.2px" width="75.2" height="46" viewBox="0 0 75 46" preserveAspectRatio="none"><defs><linearGradient id="t6" x1="0" y1="0" x2="1" y2="0"><stop offset="0" stop-color="#d3cfc9"/><stop offset=".2" stop-color="#dcdad5"/><stop offset=".3" stop-color="#e3e2de"/><stop offset=".4" stop-color="#c9c7c1"/><stop offset=".46" stop-color="#e0dfdb"/><stop offset=".5" stop-color="#cfcdc7"/><stop offset=".6" stop-color="#e6e5e1"/><stop offset=".75" stop-color="#dddbd6"/><stop offset="1" stop-color="#d6d3cd"/></linearGradient><filter id="b6" x="-5%" y="-5%" width="110%" height="110%"><feGaussianBlur stdDeviation=".7"/></filter></defs>
<rect width="75" height="46" fill="url(#t6)"/><g filter="url(#b6)">
<g fill="#eeeae3"><ellipse cx="5" cy="8" rx="5.500" ry="6"/><ellipse cx="10" cy="19" rx="6.500" ry="6"/><ellipse cx="7" cy="31" rx="6" ry="5"/><ellipse cx="12" cy="40" rx="8" ry="5"/><ellipse cx="58" cy="5" rx="6" ry="5"/><ellipse cx="68" cy="9" rx="5.500" ry="6"/><ellipse cx="66" cy="19" rx="6" ry="5.500"/><ellipse cx="64" cy="28" rx="6" ry="5"/><ellipse cx="69" cy="38" rx="5" ry="6.500"/></g>
<g fill="#b9b2a8"><ellipse cx="9" cy="25.500" rx="5" ry="1"/><ellipse cx="6" cy="36" rx="5" ry="1"/><ellipse cx="63" cy="14" rx="5" ry="1"/><ellipse cx="62" cy="23.500" rx="4" ry="1"/></g>
<ellipse cx="6.500" cy="7.500" rx="2.800" ry="3.800" fill="#d9a53c" transform="rotate(25 6.500 7.500)"/><ellipse cx="6.800" cy="7.200" rx="1" ry="2" fill="#7a5a1c" transform="rotate(25 6.800 7.200)"/>
<ellipse cx="9" cy="19.500" rx="3.800" ry="3" fill="#d8b058" transform="rotate(-30 9 19.500)"/><path d="M6.500 21 L11.500 17.500" stroke="#6b5426" stroke-width="1"/>
<ellipse cx="65.500" cy="27" rx="4.200" ry="2.800" fill="#d7b565" transform="rotate(-30 65.500 27)"/><path d="M62.500 28.500 L67.500 25" stroke="#6b5426" stroke-width="1"/>
<ellipse cx="68.500" cy="38" rx="2.800" ry="4.600" fill="#d69d34" transform="rotate(-15 68.500 38)"/><ellipse cx="68.300" cy="38" rx="1" ry="2.400" fill="#8a6420" transform="rotate(-15 68.300 38)"/></g></svg>
<svg class="abs th" style="left:698.3px;top:107px;height:50px;width:75.2px" width="75.2" height="50" viewBox="0 0 75 50" preserveAspectRatio="none"><defs><filter id="b7" x="-5%" y="-5%" width="110%" height="110%"><feGaussianBlur stdDeviation=".55"/></filter></defs>
<rect width="75" height="50" fill="#eadfb4"/><g filter="url(#b7)">
<rect x="-2" y="-2" width="79" height="54" fill="#ebe0b8"/>
<path d="M-2 -2 H46 L40.800 11.200 L50 18 L36 26 L-2 15Z" fill="#e7d897"/>
<path d="M69 -2 H77 V26 L55.300 21Z" fill="#e9e5d6"/>
<path d="M44.400 -2 H70 L55.300 21 L40.800 11.200Z" fill="#27354d"/>
<path d="M36 26 L55 21 L77 26 V31 L64 34.400 L51.700 45 L54 52 H36 L28.500 44.200 L22.700 50 L17 36Z" fill="#ecdfb6"/>
<path d="M0.900 16 L35 26 L15.400 31.900 L18.500 45 L10 30Z" fill="#4a4a30"/><path d="M0.900 16 L14 20 L12 31 L18.500 45 L16 46 Z" fill="#2c3540"/><path d="M12 21 L35 26 L15.400 31.900Z" fill="#6b6832"/>
<path d="M-2 15 L17.600 45.600 L16.200 52 H8.200 L-2 29.700Z" fill="#e0902a"/>
<path d="M-2 30 L8.200 52 H4.600 L-2 36Z" fill="#d9b82e"/><path d="M-2 33 L4.600 52 H-2Z" fill="#1f2433"/>
<path d="M9 44 L13 52 H8.200Z" fill="#d6b03a"/>
<path d="M22.700 52 L28.500 44.200 L36 52Z" fill="#c4a14a"/>
<path d="M51.700 45 L64.700 34.400 L77 42 V52 H53.800Z" fill="#a39a44"/>
<path d="M64.700 34.400 L66.200 31.200 L77 30.800 V42Z" fill="#d9c23e"/><circle cx="75" cy="41" r="2" fill="#4a4420"/></g></svg>
<div class="cap" style="left:137.6px">apple-2561930_<br>1280</div>
<div class="cap" style="left:228.9px">background-28<br>28269_960_720</div>
<div class="cap" style="left:320.1px">black-1072366_<br>960_720</div>
<div class="cap" style="left:411.6px">coffee-2425234<br>_1280</div>
<div class="cap" style="left:502.9px">color-3871156_<br>1280</div>
<div class="cap" style="left:594.6px">eggs-7130320_<br>1280</div>
<div class="cap" style="left:685.9px">fabric-2945757_<br>1280</div>
<!-- bottom fields -->
<span class="lbl" style="right:684.5px;top:356px;letter-spacing:-0.3px;font-size:10.3px;line-height:14px;color:#1b1b1b">文件名(N):</span>
<span class="lbl" style="right:684.5px;top:379px;letter-spacing:-0.35px;font-size:10.3px;line-height:14px;color:#1b1b1b">保存类型(T):</span>
<div class="inp" style="left:104px;top:352px;width:676px;height:20px"></div>
<span class="lbl" style="left:108px;top:355px;font-size:10.5px;line-height:14px;color:#111">apple-2561930_1280</span>
<svg class="abs" style="left:768px;top:359px" width="9" height="6" viewBox="0 0 9 6"><path d="M1 1 L4.5 4.6 L8 1" fill="none" stroke="#555" stroke-width="1.1"/></svg>
<div class="inp" style="left:104px;top:374.5px;width:676px;height:20.5px;background:#cce4f7;border-color:#0078d7"></div>
<span class="lbl" style="left:108px;top:378px;font-size:10.5px;line-height:14px;color:#111;letter-spacing:-0.28px">PNG (*.PNG;*.PNG)</span>
<svg class="abs" style="left:768px;top:382px" width="9" height="6" viewBox="0 0 9 6"><path d="M1 1 L4.5 4.6 L8 1" fill="none" stroke="#444" stroke-width="1.1"/></svg>
<svg class="abs" style="left:10px;top:523px" width="9" height="6" viewBox="0 0 9 6"><path d="M1 5 L4.5 1.4 L8 5" fill="none" stroke="#333" stroke-width="1.3"/></svg>
<span class="lbl" style="left:25px;top:521px;font-size:10.3px;line-height:14px;color:#1b1b1b">隐藏文件夹</span>
<!-- title -->
<svg class="abs" style="left:7px;top:6px" width="13" height="13" viewBox="0 0 13 13"><rect width="13" height="13" rx="1" fill="#0b2f3f"/><text x="6.5" y="9.6" font-family="Liberation Sans, sans-serif" font-size="7.5" font-weight="bold" fill="#2e9bd6" text-anchor="middle">Ps</text></svg>
<span class="lbl" style="left:24.5px;top:6.5px;font-size:10.3px;line-height:14px;color:#1b1b1b">另存为</span>
<svg class="abs" style="left:767px;top:7px" width="11" height="11" viewBox="0 0 11 11"><path d="M1 1 L10 10 M10 1 L1 10" stroke="#222" stroke-width="1.1" fill="none"/></svg>
<!-- nav arrows -->
<svg class="abs" style="left:11px;top:41px" width="100" height="14" viewBox="0 0 100 14" fill="none" stroke-width="1.1" stroke-linecap="round" stroke-linejoin="round"><path d="M12 7 H2.5 M6.4 3 L2.5 7 L6.4 11" stroke="#a8a8a8"/><path d="M31 7 H40.5 M36.6 3 L40.5 7 L36.6 11" stroke="#a8a8a8"/><path d="M58.5 5.4 L61.4 8.4 L64.3 5.4" stroke="#a0a0a0"/><path d="M85.4 12 V2.5 M81.4 6.4 L85.4 2.5 L89.4 6.4" stroke="#6a6a6a"/></svg>
<!-- address box -->
<div class="abs" style="left:114px;top:34px;width:483px;height:28px;border:1px solid #ebecef;border-bottom-color:#e2e3e7;border-radius:3px;background:#fdfdfe"></div>
<svg class="abs" style="left:121px;top:42px" width="15" height="12" viewBox="0 0 15 12"><path d="M0.6 1.6 Q0.6 0.6 1.6 0.6 H5 L6.4 2 H13.4 Q14.4 2 14.4 3 V10.4 Q14.4 11.4 13.4 11.4 H1.6 Q0.6 11.4 0.6 10.4Z" fill="#f3c744"/><path d="M0.6 3.4 H14.4 V10.4 Q14.4 11.4 13.4 11.4 H1.6 Q0.6 11.4 0.6 10.4Z" fill="#fbdc6a"/></svg>
<svg class="abs" style="left:140.5px;top:44.5px" width="5" height="8" viewBox="0 0 5 8"><path d="M1 0.8 L4 4 L1 7.2" fill="none" stroke="#4a4a4a" stroke-width="1.1"/></svg><span class="lbl ct" style="left:153.5px">桌面</span>
<svg class="abs" style="left:181.5px;top:44.5px" width="5" height="8" viewBox="0 0 5 8"><path d="M1 0.8 L4 4 L1 7.2" fill="none" stroke="#4a4a4a" stroke-width="1.1"/></svg><span class="lbl ct" style="left:193.5px">文档示例</span>
<svg class="abs" style="left:242.0px;top:44.5px" width="5" height="8" viewBox="0 0 5 8"><path d="M1 0.8 L4 4 L1 7.2" fill="none" stroke="#4a4a4a" stroke-width="1.1"/></svg><span class="lbl ct" style="left:254.5px">图片格式</span>
<svg class="abs" style="left:303.0px;top:44.5px" width="5" height="8" viewBox="0 0 5 8"><path d="M1 0.8 L4 4 L1 7.2" fill="none" stroke="#4a4a4a" stroke-width="1.1"/></svg><span class="lbl ct" style="left:315.5px">PNG</span>
<svg class="abs" style="left:543px;top:45px" width="10" height="7" viewBox="0 0 10 7"><path d="M1 1.2 L5 5.2 L9 1.2" fill="none" stroke="#8a8a8a" stroke-width="1.1"/></svg>
<svg class="abs" style="left:573px;top:42px" width="13" height="13" viewBox="0 0 13 13"><path d="M10.9 6.5 A4.5 4.5 0 1 1 8.6 2.6" fill="none" stroke="#777" stroke-width="1.1"/><path d="M8.2 0.6 L9 3 L6.6 3.6" fill="none" stroke="#777" stroke-width="1.1"/></svg>
<!-- search -->
<div class="abs" style="left:607px;top:34px;width:167px;height:28px;border:1px solid #ebecef;border-bottom-color:#e2e3e7;border-radius:3px;background:#fdfdfe"></div>
<span class="lbl" style="left:615px;top:42px;font-size:10.3px;line-height:14px;color:#757575">在 PNG 中搜索</span>
<svg class="abs" style="left:751px;top:42px" width="12" height="12" viewBox="0 0 12 12"><circle cx="7.4" cy="4.4" r="3.1" fill="none" stroke="#555" stroke-width="1.2"/><path d="M5.2 6.6 L1.4 10.4" stroke="#555" stroke-width="1.4" fill="none"/></svg>
<!-- command row -->
<span class="lbl" style="left:15.5px;top:79.5px;font-size:10.3px;line-height:14px;color:#2b2b2b">组织</span>
<svg class="abs" style="left:39.5px;top:83px" width="7" height="4" viewBox="0 0 7 4"><path d="M0 0 H7 L3.5 4Z" fill="#222"/></svg>
<span class="lbl" style="left:71px;top:79.5px;font-size:10.3px;line-height:14px;color:#2b2b2b">新建文件夹</span>
<svg class="abs" style="left:707px;top:79px" width="30" height="12" viewBox="0 0 30 12"><rect x="1.2" y="1" width="9.6" height="7.6" fill="#fff" stroke="#222" stroke-width="1.1"/><path d="M0.6 10.6 H11.4" stroke="#222" stroke-width="1.2"/><path d="M19.6 4 H26 L22.8 7.6Z" fill="#222"/></svg>
<svg class="abs" style="left:758px;top:78px" width="14" height="14" viewBox="0 0 14 14"><circle cx="7" cy="7" r="6.6" fill="#1585dd"/><text x="7" y="10.4" font-family="Liberation Sans, sans-serif" font-size="9.5" font-weight="bold" fill="#fff" text-anchor="middle">?</text></svg>
</div>
<div class="abs" id="dd">
<div style="top:-0.30px;letter-spacing:-0.228px">Photoshop (*.PSD;*.PDD;*.PSDT)</div>
<div style="top:13.84px;letter-spacing:-0.467px">大型文档格式 (*.PSB)</div>
<div style="top:27.98px;letter-spacing:-0.262px">BMP (*.BMP;*.RLE;*.DIB)</div>
<div style="top:42.12px;letter-spacing:-0.160px">CompuServe GIF (*.GIF)</div>
<div style="top:56.26px;letter-spacing:-0.109px">Dicom (*.DCM;*.DC3;*.DIC)</div>
<div style="top:70.40px;letter-spacing:-0.246px">Photoshop EPS (*.EPS)</div>
<div style="top:84.54px;letter-spacing:-0.157px">Photoshop DCS 1.0 (*.EPS)</div>
<div style="top:98.68px;letter-spacing:-0.157px">Photoshop DCS 2.0 (*.EPS)</div>
<div style="top:112.82px;letter-spacing:-0.358px">IFF 格式 (*.IFF;*.TDI)</div>
<div class="sel" style="top:126.96px;letter-spacing:-0.663px">JPEG (*.JPG;*.JPEG;*.JPE)</div>
<div style="top:141.10px;letter-spacing:-0.514px">JPEG 2000 (*.JPF;*.JPX;*.JP2;*.J2C;*.J2K;*.JPC)</div>
<div style="top:155.24px;letter-spacing:-0.581px">JPEG 立体 (*.JPS)</div>
<div style="top:169.38px;letter-spacing:-0.481px">PCX (*.PCX)</div>
<div style="top:183.52px;letter-spacing:-0.243px">Photoshop PDF (*.PDF;*.PDP)</div>
<div style="top:197.66px;letter-spacing:0.012px">Photoshop Raw (*.RAW)</div>
<div style="top:211.80px;letter-spacing:-0.272px">Pixar (*.PXR)</div>
<div style="top:225.94px;letter-spacing:-0.277px">PNG (*.PNG;*.PNG)</div>
<div style="top:240.08px;letter-spacing:-0.038px">Portable Bit Map (*.PBM;*.PGM;*.PPM;*.PNM;*.PFM;*.PAM)</div>
<div style="top:254.22px;letter-spacing:-0.320px">Scitex CT (*.SCT)</div>
<div style="top:268.36px;letter-spacing:-0.202px">Targa (*.TGA;*.VDA;*.ICB;*.VST)</div>
<div style="top:282.50px;letter-spacing:-0.479px">TIFF (*.TIF;*.TIFF)</div>
<div style="top:296.64px;letter-spacing:-0.226px">多图片格式 (*.MPO)</div>
</div>
</body>
</html>
